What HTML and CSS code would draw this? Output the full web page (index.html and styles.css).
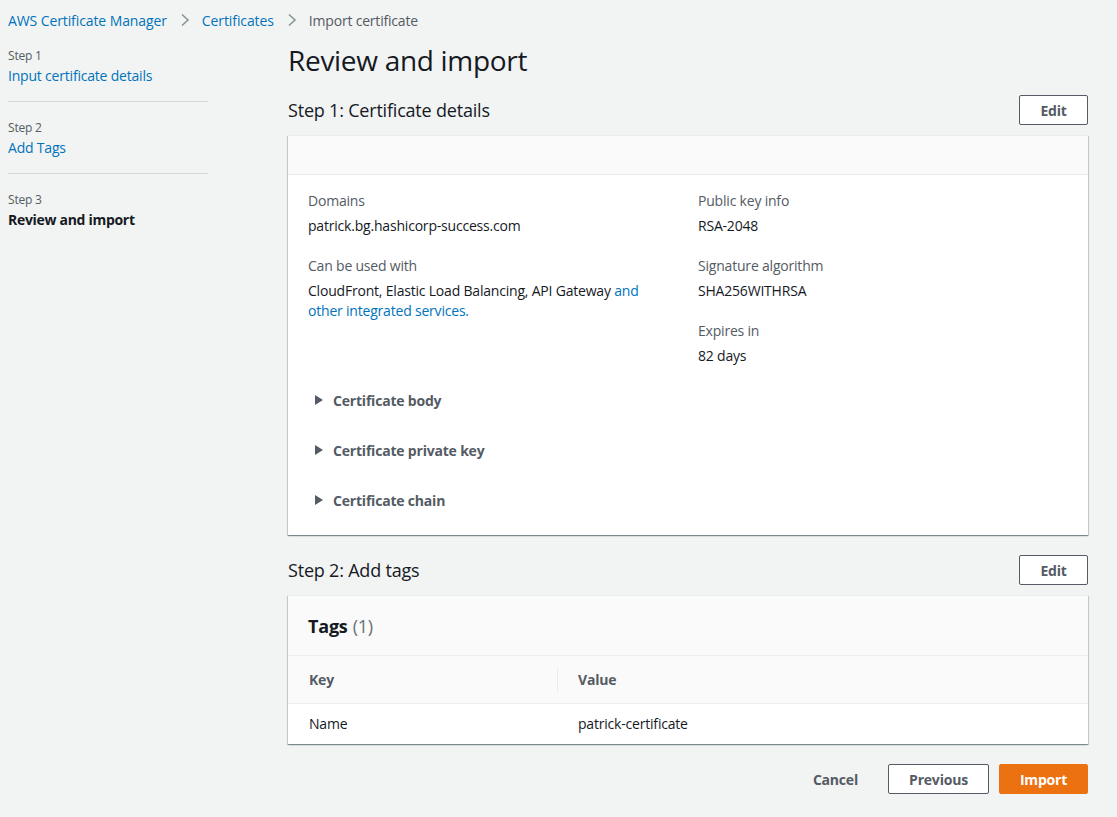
FILE: index.html
```html
<!DOCTYPE html>
<html lang="en">
<head>
<meta charset="utf-8">
<title>Import certificate</title>
<link rel="stylesheet" href="styles.css">
</head>
<body>
<nav class="crumbs">
  <a class="crumb-link" href="#">AWS Certificate Manager</a>
  <svg class="chev" width="10" height="14" viewBox="0 0 10 14"><path d="M2 1.5 L8 7 L2 12.5" fill="none" stroke="#879596" stroke-width="1.6"/></svg>
  <a class="crumb-link" href="#">Certificates</a>
  <svg class="chev" width="10" height="14" viewBox="0 0 10 14"><path d="M2 1.5 L8 7 L2 12.5" fill="none" stroke="#879596" stroke-width="1.6"/></svg>
  <span class="crumb-current">Import certificate</span>
</nav>
<div class="layout">
  <aside class="steps">
    <div class="step">
      <div class="step-num">Step 1</div>
      <a class="step-link" href="#">Input certificate details</a>
    </div>
    <div class="step">
      <div class="step-num">Step 2</div>
      <a class="step-link" href="#">Add Tags</a>
    </div>
    <div class="step step-last">
      <div class="step-num">Step 3</div>
      <div class="step-active">Review and import</div>
    </div>
  </aside>
  <main class="main">
    <h1 class="title">Review and import</h1>

    <div class="section-head">
      <h2 class="section-title">Step 1: Certificate details</h2>
      <button class="btn">Edit</button>
    </div>
    <section class="card">
      <div class="card-header"></div>
      <div class="card-body">
        <div class="cols">
          <div class="col col-first">
            <div class="field">
              <div class="label">Domains</div>
              <div class="value">patrick.bg.hashicorp-success.com</div>
            </div>
            <div class="field">
              <div class="label">Can be used with</div>
              <div class="value">CloudFront, Elastic Load Balancing, API Gateway <a href="#" class="link">and other integrated services.</a></div>
            </div>
          </div>
          <div class="col col-second">
            <div class="field">
              <div class="label">Public key info</div>
              <div class="value">RSA-2048</div>
            </div>
            <div class="field">
              <div class="label">Signature algorithm</div>
              <div class="value">SHA256WITHRSA</div>
            </div>
            <div class="field">
              <div class="label">Expires in</div>
              <div class="value">82 days</div>
            </div>
          </div>
        </div>
        <div class="expanders">
          <div class="expander"><svg class="tri" width="8" height="10" viewBox="0 0 8 10"><path d="M0 0 L8 5 L0 10 Z" fill="#545b64"/></svg><span>Certificate body</span></div>
          <div class="expander"><svg class="tri" width="8" height="10" viewBox="0 0 8 10"><path d="M0 0 L8 5 L0 10 Z" fill="#545b64"/></svg><span>Certificate private key</span></div>
          <div class="expander"><svg class="tri" width="8" height="10" viewBox="0 0 8 10"><path d="M0 0 L8 5 L0 10 Z" fill="#545b64"/></svg><span>Certificate chain</span></div>
        </div>
      </div>
    </section>

    <div class="section-head second">
      <h2 class="section-title">Step 2: Add tags</h2>
      <button class="btn">Edit</button>
    </div>
    <section class="card">
      <div class="tags-header"><span class="tags-title">Tags</span> <span class="tags-count">(1)</span></div>
      <div class="trow thead">
        <div class="tcell key"><span>Key</span></div>
        <div class="tcell val">Value</div>
      </div>
      <div class="trow">
        <div class="tcell key">Name</div>
        <div class="tcell val">patrick-certificate</div>
      </div>
    </section>

    <div class="actions">
      <button class="btn-link">Cancel</button>
      <button class="btn btn-wide">Previous</button>
      <button class="btn btn-primary">Import</button>
    </div>
  </main>
</div>
</body>
</html>
```
FILE: styles.css
```css
* { box-sizing: border-box; }
html, body { margin: 0; padding: 0; }
body {
  background: #f2f3f3;
  font-family: "Open Sans", "Noto Sans", "Liberation Sans", sans-serif;
  font-size: 14px;
  letter-spacing: -0.2px;
  color: #16191f;
  width: 1117px;
  height: 817px;
  overflow: hidden;
}
a { text-decoration: none; color: #0073bb; }
button { font-family: inherit; cursor: pointer; letter-spacing: -0.2px; }

.crumbs {
  display: flex;
  align-items: center;
  height: 40px;
  padding: 0 8px;
  font-size: 14px;
}
.crumb-link { color: #0073bb; letter-spacing: -0.1px; }
.chev { margin: 0 12px 0 13px; }
.crumb-current { color: #545b64; }

.layout {
  display: flex;
}
.steps {
  width: 200px;
  margin-left: 8px;
  flex: none;
}
.step {
  padding: 8px 0 15px;
  border-bottom: 1px solid #d5dbdb;
  margin-bottom: 10px;
}
.step-last { border-bottom: none; }
.step-num {
  font-size: 12px;
  color: #545b64;
  line-height: 16px;
}
.step-link, .step-active {
  display: block;
  line-height: 20px;
  margin-top: 2px;
}
.step-active { font-weight: 700; color: #16191f; letter-spacing: -0.3px; }

.main {
  margin-left: 80px;
  width: 800px;
}
.title {
  margin: 0;
  font-size: 28px;
  font-weight: 400;
  line-height: 40px;
  letter-spacing: -0.3px;
  height: 55px;
}
.section-head {
  display: flex;
  align-items: center;
  justify-content: space-between;
  height: 30px;
  margin-bottom: 10px;
}
.section-head.second { margin-top: 20px; }
.section-title {
  margin: 0;
  font-size: 18px;
  font-weight: 400;
}
.btn {
  height: 30px;
  width: 69px;
  padding: 0;
  background: #fff;
  border: 1px solid #545b64;
  border-radius: 2px;
  color: #545b64;
  font-weight: 700;
  font-size: 14px;
}
.btn-wide { width: 101px; }
.btn-primary {
  background: #ec7211;
  border-color: #ec7211;
  color: #fff;
  width: 89px;
}
.btn-link {
  background: none;
  border: none;
  color: #545b64;
  font-weight: 700;
  font-size: 14px;
  padding: 0 20px;
  height: 30px;
}

.card {
  background: #fff;
  box-shadow: 0 1px 1px 0 rgba(0,28,36,0.3), 1px 1px 1px 0 rgba(0,28,36,0.15), -1px 1px 1px 0 rgba(0,28,36,0.15);
  border-top: 1px solid #eaeded;
}
.card-header {
  height: 39px;
  background: #fafafa;
  border-bottom: 1px solid #eaeded;
}
.card-body {
  padding: 16px 20px 25px;
}
.cols {
  display: flex;
}
.col-first {
  width: 390px;
  flex: none;
}
.col-second { flex: 1; }
.field { margin-bottom: 20px; }
.label {
  color: #545b64;
  line-height: 20px;
  margin-bottom: 5px;
}
.value {
  line-height: 20px;
  padding-right: 30px;
}
.link { color: #0073bb; }

.expanders { margin-top: 4px; }
.expander {
  display: flex;
  align-items: center;
  height: 20px;
  margin-bottom: 30px;
  padding-left: 7px;
  font-weight: 700;
  color: #545b64;
}
.expander:last-child { margin-bottom: 0; }
.tri { margin-right: 10px; }

.tags-header {
  height: 60px;
  background: #fafafa;
  border-bottom: 1px solid #eaeded;
  display: flex;
  align-items: center;
  padding: 0 20px;
  font-size: 18px;
}
.tags-title { font-weight: 700; }
.tags-count { color: #687078; margin-left: 5px; }
.trow {
  display: flex;
  height: 40px;
  align-items: center;
}
.thead {
  height: 48px;
  background: #fafafa;
  border-bottom: 1px solid #eaeded;
  font-weight: 700;
  color: #545b64;
}
.tcell { line-height: 20px; }
.tcell.key {
  width: 270px;
  padding-left: 21px;
}
.thead .tcell.key {
  border-right: 1px solid #eaeded;
  height: 24px;
  display: flex;
  align-items: center;
}
.tcell.val { padding-left: 20px; }

.actions {
  display: flex;
  justify-content: flex-end;
  align-items: center;
  margin-top: 20px;
  gap: 10px;
}
```
